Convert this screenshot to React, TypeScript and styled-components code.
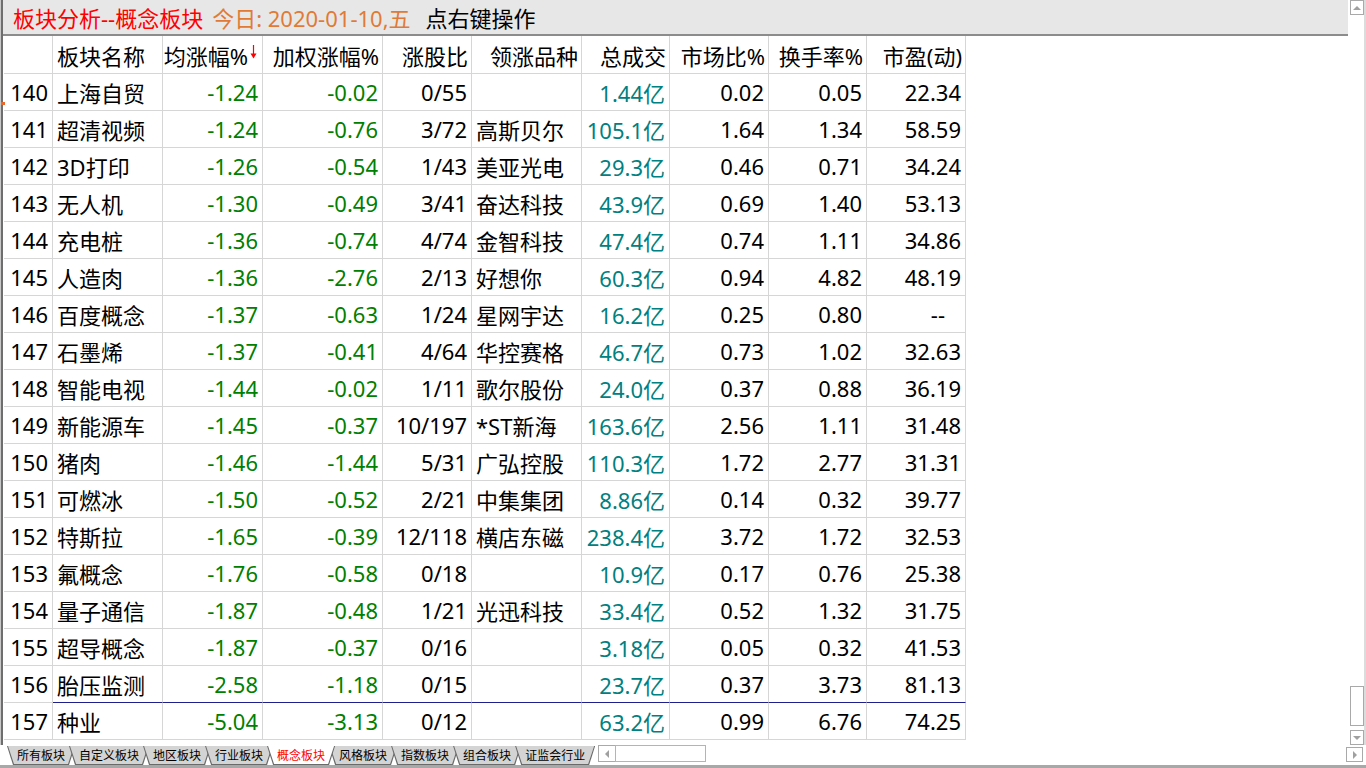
import React from 'react';
import styled, { createGlobalStyle } from 'styled-components';

const Global = createGlobalStyle`
  html, body { margin: 0; padding: 0; background: #ffffff; }
  body { font-family: "Noto Sans", "Noto Sans CJK SC", sans-serif; }
  #root { width: 1366px; height: 768px; overflow: hidden; }
`;

const Screen = styled.div`
  width: 1366px;
  height: 768px;
  display: flex;
  flex-direction: column;
  background: #ffffff;
  overflow: hidden;
`;

const Main = styled.div`
  display: flex;
  height: 745px;
`;

const LeftPane = styled.div`
  position: relative;
  flex: 1;
  display: flex;
  flex-direction: column;
  border-left: 1px solid #c8c8c8;
`;

const LeftInner = styled.div`
  flex: 1;
  display: flex;
  flex-direction: column;
  border-left: 2px solid #6e6e6e;
`;

const Marker = styled.div`
  position: absolute;
  left: 0;
  top: 102px;
  width: 4px;
  height: 3px;
  background: #e8682c;
`;

const TitleBar = styled.div`
  height: 34px;
  background: #e7e7e7;
  border-bottom: 2px solid #8c8c8c;
  display: flex;
  align-items: center;
  padding-left: 10px;
  font-size: 22px;
  white-space: nowrap;
`;

const TitlePart = styled.span<{ $color: string; $gap?: number }>`
  color: ${(p) => p.$color};
  margin-left: ${(p) => p.$gap ?? 0}px;
`;

const GridArea = styled.div`
  flex: 1;
  padding-left: 1px;
  display: flex;
  flex-direction: column;
`;

const Row = styled.div<{ $h: number }>`
  display: grid;
  grid-template-columns: 49px 110px 100px 120px 89px 110px 88px 99px 98px 99px;
  height: ${(p) => p.$h}px;
  width: 962px;
`;

const Cell = styled.div<{
  $align: 'left' | 'right';
  $color?: string;
  $pad?: number;
  $under?: boolean;
}>`
  box-sizing: border-box;
  display: flex;
  align-items: center;
  justify-content: ${(p) => (p.$align === 'left' ? 'flex-start' : 'flex-end')};
  padding-left: ${(p) => (p.$align === 'left' ? 4 : 0)}px;
  padding-right: ${(p) => (p.$align === 'right' ? p.$pad ?? 4 : 0)}px;
  border-right: 1px solid #d6d6d6;
  border-bottom: 1px solid ${(p) => (p.$under ? '#20208c' : '#d6d6d6')};
  color: ${(p) => p.$color ?? '#000000'};
  font-size: 22px;
  white-space: nowrap;
  overflow: hidden;
`;

const SortArrow = styled.svg`
  margin-left: 2px;
  margin-top: -6px;
  flex: none;
`;

const VScroll = styled.div`
  width: 18px;
  box-sizing: border-box;
  border-right: 2px solid #dcdcdc;
  padding-left: 2px;
  display: flex;
  flex-direction: column;
`;

const ScrollBtn = styled.div<{ $w?: number; $h?: number }>`
  box-sizing: border-box;
  width: ${(p) => p.$w ?? 14}px;
  height: ${(p) => p.$h ?? 15}px;
  border: 1px solid #a9a9a9;
  background: #ffffff;
  display: flex;
  align-items: center;
  justify-content: center;
  flex: none;
`;

const TriUp = styled.div`
  width: 0;
  height: 0;
  border-left: 4px solid transparent;
  border-right: 4px solid transparent;
  border-bottom: 4px solid #a0a0a0;
`;

const TriDown = styled.div`
  width: 0;
  height: 0;
  border-left: 4px solid transparent;
  border-right: 4px solid transparent;
  border-top: 4px solid #a0a0a0;
`;

const TriLeft = styled.div`
  width: 0;
  height: 0;
  border-top: 4px solid transparent;
  border-bottom: 4px solid transparent;
  border-right: 4px solid #a0a0a0;
`;

const TriRight = styled.div`
  width: 0;
  height: 0;
  border-top: 4px solid transparent;
  border-bottom: 4px solid transparent;
  border-left: 4px solid #a0a0a0;
`;

const Spacer = styled.div`
  flex: 1;
`;

const Thumb = styled.div`
  box-sizing: border-box;
  width: 14px;
  height: 40px;
  border: 1px solid #a9a9a9;
  margin-bottom: 4px;
`;

const BottomStrip = styled.div`
  height: 20px;
  display: flex;
  align-items: flex-start;
`;

const Tabs = styled.div`
  display: flex;
  padding-left: 7px;
  padding-top: 1px;
`;

const Tab = styled.div<{ $z: number; $first?: boolean }>`
  position: relative;
  z-index: ${(p) => p.$z};
  margin-left: ${(p) => (p.$first ? 0 : -6)}px;
  height: 19px;
  padding: 0 1px 1px 1px;
  box-sizing: border-box;
  background: #6a6a6a;
  clip-path: polygon(0 0, 100% 0, calc(100% - 6px) 100%, 6px 100%);
  display: flex;
`;

const TabFace = styled.div<{ $active?: boolean }>`
  flex: 1;
  padding: 0 9px;
  background: ${(p) => (p.$active ? '#ffffff' : '#d4d4d4')};
  clip-path: polygon(0 0, 100% 0, calc(100% - 6px) 100%, 6px 100%);
  color: ${(p) => (p.$active ? '#ff0000' : '#000000')};
  font-family: "Noto Sans CJK SC", sans-serif;
  font-size: 12px;
  line-height: 18px;
  white-space: nowrap;
`;

const HScroll = styled.div`
  display: flex;
  margin-left: 3px;
`;

const HTrack = styled.div`
  box-sizing: border-box;
  width: 91px;
  height: 17px;
  border: 1px solid #b4b4b4;
  margin-left: -1px;
`;

const RightBtnWrap = styled.div`
  margin-left: auto;
  margin-right: 3px;
  padding-top: 2px;
`;

const BottomBar = styled.div`
  height: 3px;
  background: #a8a8a8;
`;

type Col = { align: 'left' | 'right'; color?: string };

const cols: Col[] = [
  { align: 'right' },
  { align: 'left' },
  { align: 'right', color: '#008000' },
  { align: 'right', color: '#008000' },
  { align: 'right' },
  { align: 'left' },
  { align: 'right', color: '#008080' },
  { align: 'right' },
  { align: 'right' },
  { align: 'right' },
];

const headers = ['', '板块名称', '均涨幅%', '加权涨幅%', '涨股比', '领涨品种', '总成交', '市场比%', '换手率%', '市盈(动)'];

const rows: string[][] = [
  ['140', '上海自贸', '-1.24', '-0.02', '0/55', '', '1.44亿', '0.02', '0.05', '22.34'],
  ['141', '超清视频', '-1.24', '-0.76', '3/72', '高斯贝尔', '105.1亿', '1.64', '1.34', '58.59'],
  ['142', '3D打印', '-1.26', '-0.54', '1/43', '美亚光电', '29.3亿', '0.46', '0.71', '34.24'],
  ['143', '无人机', '-1.30', '-0.49', '3/41', '奋达科技', '43.9亿', '0.69', '1.40', '53.13'],
  ['144', '充电桩', '-1.36', '-0.74', '4/74', '金智科技', '47.4亿', '0.74', '1.11', '34.86'],
  ['145', '人造肉', '-1.36', '-2.76', '2/13', '好想你', '60.3亿', '0.94', '4.82', '48.19'],
  ['146', '百度概念', '-1.37', '-0.63', '1/24', '星网宇达', '16.2亿', '0.25', '0.80', '--'],
  ['147', '石墨烯', '-1.37', '-0.41', '4/64', '华控赛格', '46.7亿', '0.73', '1.02', '32.63'],
  ['148', '智能电视', '-1.44', '-0.02', '1/11', '歌尔股份', '24.0亿', '0.37', '0.88', '36.19'],
  ['149', '新能源车', '-1.45', '-0.37', '10/197', '*ST新海', '163.6亿', '2.56', '1.11', '31.48'],
  ['150', '猪肉', '-1.46', '-1.44', '5/31', '广弘控股', '110.3亿', '1.72', '2.77', '31.31'],
  ['151', '可燃冰', '-1.50', '-0.52', '2/21', '中集集团', '8.86亿', '0.14', '0.32', '39.77'],
  ['152', '特斯拉', '-1.65', '-0.39', '12/118', '横店东磁', '238.4亿', '3.72', '1.72', '32.53'],
  ['153', '氟概念', '-1.76', '-0.58', '0/18', '', '10.9亿', '0.17', '0.76', '25.38'],
  ['154', '量子通信', '-1.87', '-0.48', '1/21', '光迅科技', '33.4亿', '0.52', '1.32', '31.75'],
  ['155', '超导概念', '-1.87', '-0.37', '0/16', '', '3.18亿', '0.05', '0.32', '41.53'],
  ['156', '胎压监测', '-2.58', '-1.18', '0/15', '', '23.7亿', '0.37', '3.73', '81.13'],
  ['157', '种业', '-5.04', '-3.13', '0/12', '', '63.2亿', '0.99', '6.76', '74.25'],
];

const tabs = ['所有板块', '自定义板块', '地区板块', '行业板块', '概念板块', '风格板块', '指数板块', '组合板块', '证监会行业'];
const activeTab = 4;
const underlineRow = 16;

export default function App() {
  return (
    <Screen>
      <Global />
      <Main>
        <LeftPane>
          <Marker />
          <LeftInner>
            <TitleBar>
              <TitlePart $color="#ff0000">板块分析--概念板块</TitlePart>
              <TitlePart $color="#e07a36" $gap={9}>今日: 2020-01-10,五</TitlePart>
              <TitlePart $color="#000000" $gap={15}>点右键操作</TitlePart>
            </TitleBar>
            <GridArea>
              <Row $h={38}>
                {headers.map((h, i) => (
                  <Cell key={i} $align={i === 1 ? 'left' : 'right'} $pad={i === 2 ? 5 : 3}>
                    {h}
                    {i === 2 && (
                      <SortArrow width="7" height="14" viewBox="0 0 7 14">
                        <line x1="3.5" y1="0" x2="3.5" y2="11" stroke="#ff0000" strokeWidth="1.2" />
                        <polygon points="0.5,8.5 6.5,8.5 3.5,13.5" fill="#ff0000" />
                      </SortArrow>
                    )}
                  </Cell>
                ))}
              </Row>
              {rows.map((r, ri) => (
                <Row key={ri} $h={37}>
                  {r.map((v, ci) => (
                    <Cell
                      key={ci}
                      $align={cols[ci].align}
                      $color={cols[ci].color}
                      $pad={v === '--' ? 20 : 4}
                      $under={ri === underlineRow && ci > 0}
                    >
                      {v}
                    </Cell>
                  ))}
                </Row>
              ))}
            </GridArea>
          </LeftInner>
        </LeftPane>
        <VScroll>
          <ScrollBtn>
            <TriUp />
          </ScrollBtn>
          <Spacer />
          <Thumb />
          <ScrollBtn>
            <TriDown />
          </ScrollBtn>
        </VScroll>
      </Main>
      <BottomStrip>
        <Tabs>
          {tabs.map((t, i) => (
            <Tab key={t} $first={i === 0} $z={i === activeTab ? 50 : i + 1}>
              <TabFace $active={i === activeTab}>{t}</TabFace>
            </Tab>
          ))}
        </Tabs>
        <HScroll>
          <ScrollBtn $w={18} $h={17}>
            <TriLeft />
          </ScrollBtn>
          <HTrack />
        </HScroll>
        <RightBtnWrap>
          <ScrollBtn $w={17}>
            <TriRight />
          </ScrollBtn>
        </RightBtnWrap>
      </BottomStrip>
      <BottomBar />
    </Screen>
  );
}
